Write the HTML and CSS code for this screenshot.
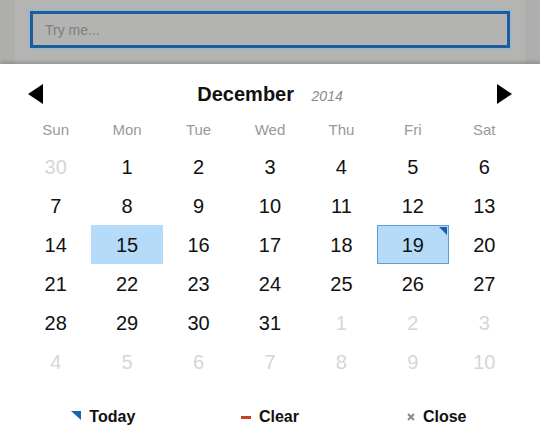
FILE: index.html
```html
<!DOCTYPE html>
<html lang="en">
<head>
    <meta charset="UTF-8">
    <meta name="viewport" content="width=device-width, initial-scale=1.0">
    <title>Date picker</title>
    <link rel="stylesheet" href="styles.css">
</head>
<body>
    <div class="top">
        <div class="frame">
            <input type="text" class="field" placeholder="Try me...">
        </div>
    </div>
    <div class="picker">
        <div class="nav">
            <span class="arrow arrow-prev"></span>
            <div class="title">December <em>2014</em></div>
            <span class="arrow arrow-next"></span>
        </div>
        <div class="grid weekdays">
            <span>Sun</span><span>Mon</span><span>Tue</span><span>Wed</span><span>Thu</span><span>Fri</span><span>Sat</span>
        </div>
        <div class="grid days">
            <span class="muted">30</span><span>1</span><span>2</span><span>3</span><span>4</span><span>5</span><span>6</span>
            <span>7</span><span>8</span><span>9</span><span>10</span><span>11</span><span>12</span><span>13</span>
            <span>14</span><span class="selected">15</span><span>16</span><span>17</span><span>18</span><span class="selected today">19</span><span>20</span>
            <span>21</span><span>22</span><span>23</span><span>24</span><span>25</span><span>26</span><span>27</span>
            <span>28</span><span>29</span><span>30</span><span>31</span><span class="muted">1</span><span class="muted">2</span><span class="muted">3</span>
            <span class="muted">4</span><span class="muted">5</span><span class="muted">6</span><span class="muted">7</span><span class="muted">8</span><span class="muted">9</span><span class="muted">10</span>
        </div>
        <div class="footer">
            <button class="action"><span class="icon-today"></span>Today</button>
            <button class="action"><span class="icon-clear"></span>Clear</button>
            <button class="action">
                <svg class="icon-close" width="8" height="8" viewBox="0 0 8 8"><path d="M1 1 L7 7 M7 1 L1 7" stroke="#8a8a8a" stroke-width="2"/></svg>Close
            </button>
        </div>
    </div>
</body>
</html>
```

FILE: styles.css
```css
* {
    margin: 0;
    padding: 0;
    box-sizing: border-box;
}
body {
    font-family: "Liberation Sans", Arial, sans-serif;
    background-color: #fff;
    width: 540px;
    height: 438px;
    overflow: hidden;
}
.top {
    height: 64px;
    background-color: #aeaeac;
}
.frame {
    margin: 0 15px;
    height: 64px;
    background-color: #b4b4b2;
    padding: 11px 15px 0;
}
.field {
    display: block;
    width: 480px;
    height: 37px;
    border: 3px solid #1c5c9a;
    box-shadow: 0 0 2px 1px #8cb6dc;
    background-color: #b3b3b1;
    padding: 0 12px;
    font-family: "Liberation Sans", Arial, sans-serif;
    font-size: 14px;
    outline: none;
}
.field::placeholder {
    color: #7e7e7e;
}
.picker {
    position: relative;
    height: 374px;
    background-color: #fff;
    padding: 0 20px;
    box-shadow: 0 -2px 4px rgba(0, 0, 0, .18);
}
.nav {
    display: flex;
    align-items: center;
    justify-content: space-between;
    height: 50px;
    padding: 15px 8px 5px;
}
.arrow {
    width: 0;
    height: 0;
    border-top: 10px solid transparent;
    border-bottom: 10px solid transparent;
}
.arrow-prev {
    border-right: 15px solid #000;
}
.arrow-next {
    border-left: 15px solid #000;
}
.title {
    font-size: 20px;
    font-weight: bold;
    color: #111;
}
.title em {
    font-size: 14px;
    font-weight: normal;
    color: #8a8a8a;
    margin-left: 12px;
}
.grid {
    display: grid;
    grid-template-columns: repeat(7, 1fr);
    text-align: center;
}
.weekdays {
    height: 33px;
    line-height: 31px;
    font-size: 15px;
    color: #999;
}
.days {
    grid-auto-rows: 39px;
    font-size: 20px;
    color: #111;
}
.days span {
    position: relative;
    line-height: 40px;
}
.days .muted {
    color: #d6d6d6;
}
.days .selected {
    background-color: #b5dbf8;
}
.days .today {
    border: 1px solid #5d9dcf;
    line-height: 38px;
}
.days .today::after {
    content: "";
    position: absolute;
    top: 1px;
    right: 1px;
    border-top: 8px solid #1b5fa9;
    border-left: 8px solid transparent;
}
.footer {
    display: grid;
    grid-template-columns: repeat(3, 1fr);
    padding-top: 24px;
}
.action {
    display: flex;
    align-items: center;
    justify-content: center;
    gap: 8px;
    height: 24px;
    border: none;
    background: none;
    font-family: "Liberation Sans", Arial, sans-serif;
    font-size: 16px;
    font-weight: bold;
    color: #111;
}
.icon-today {
    width: 0;
    height: 0;
    border-top: 9px solid #1d62ae;
    border-left: 10px solid transparent;
    margin-bottom: 4px;
}
.icon-clear {
    width: 10px;
    height: 3px;
    background-color: #c4402c;
}
```
